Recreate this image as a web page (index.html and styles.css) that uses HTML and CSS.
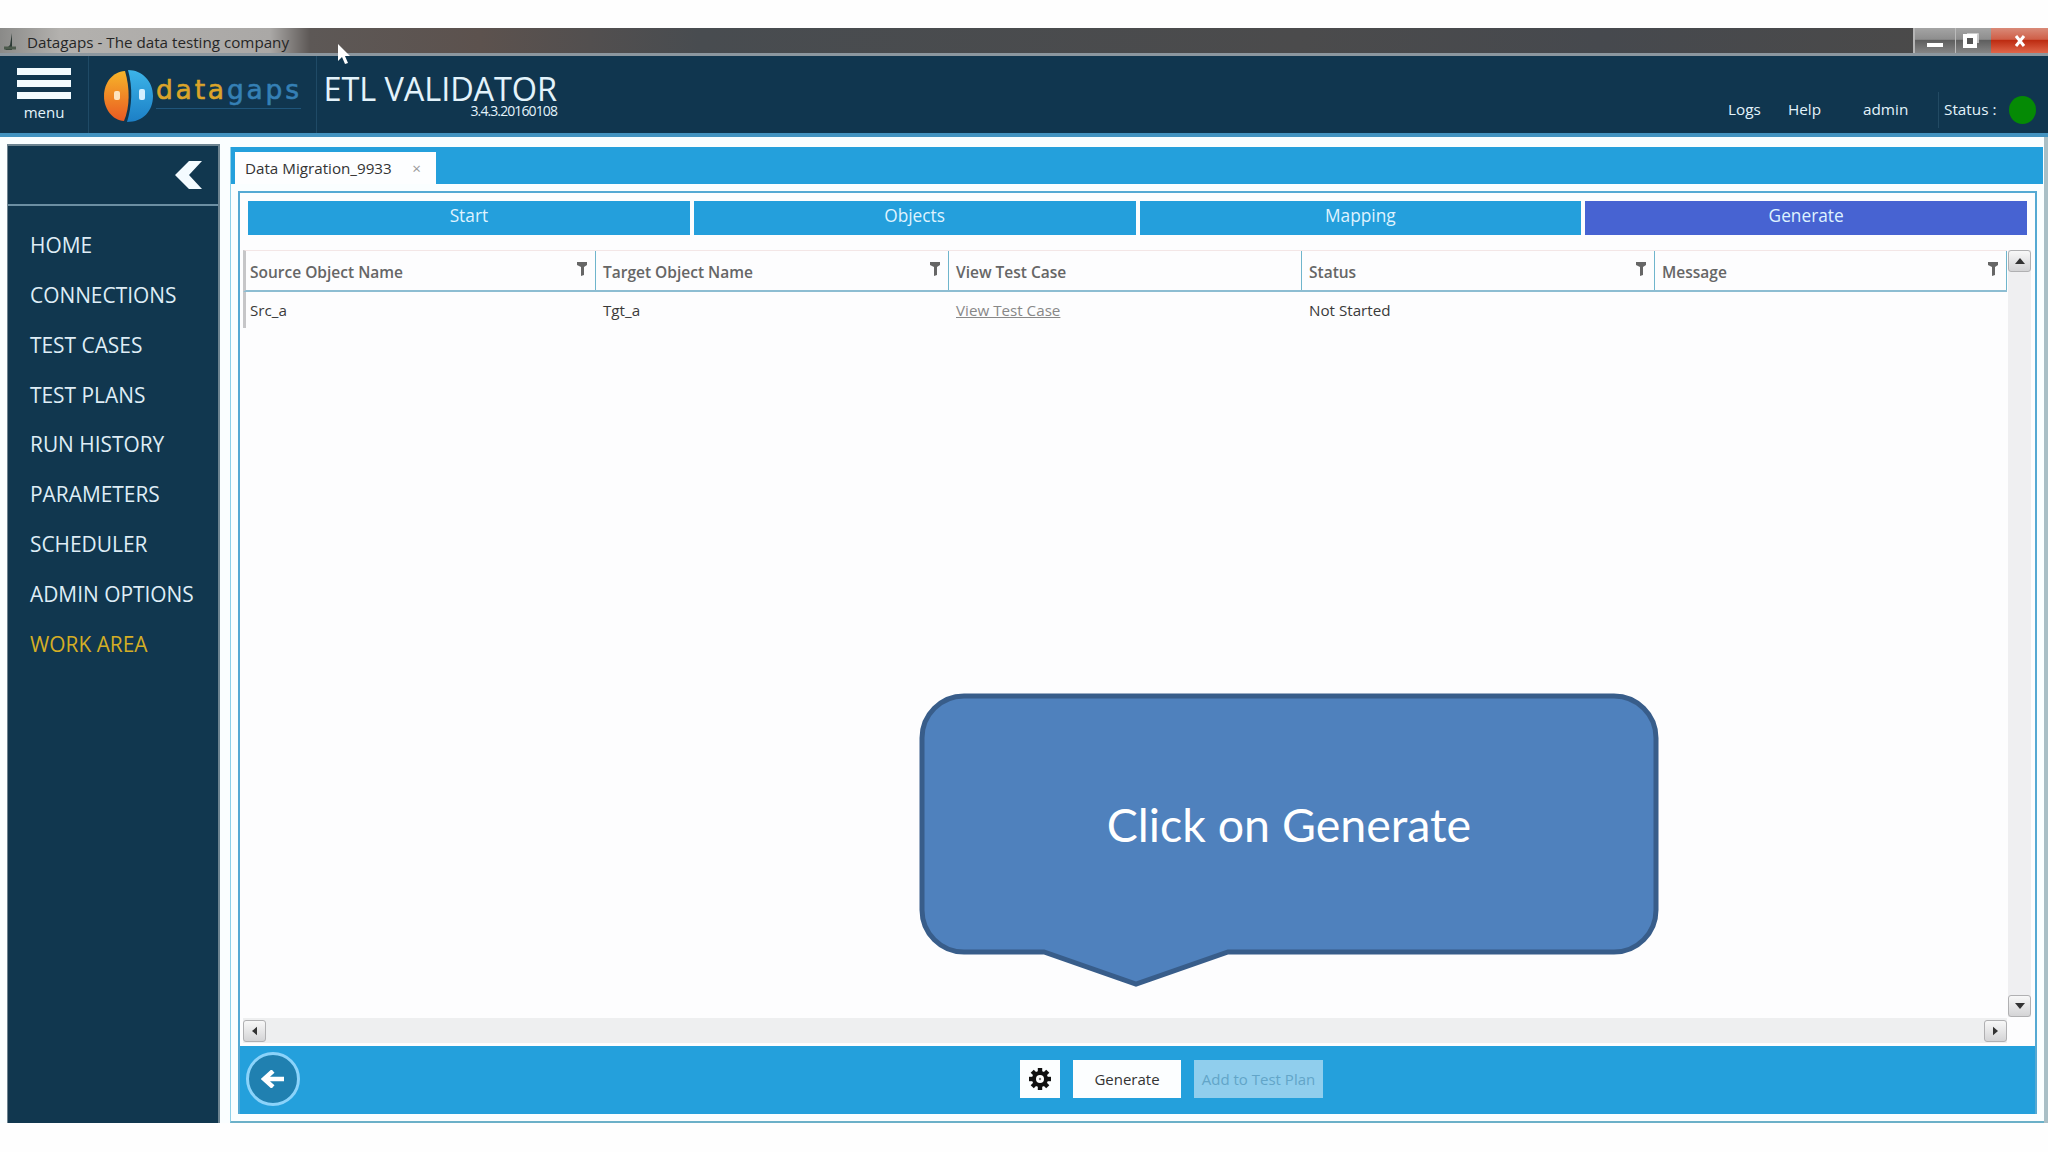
FILE: index.html
```
<!DOCTYPE html>
<html lang="en">
<head>
    <meta charset="UTF-8">
    <meta name="viewport" content="width=device-width, initial-scale=1.0">
    <title>Datagaps - The data testing company</title>
    <link rel="stylesheet" href="styles.css">
</head>
<body>
    <div class="window">
        <div class="titlebar">
            <svg class="app-icon" width="18" height="22" viewBox="0 0 18 22">
                <path d="M12 3v17H5l5-5z" fill="#2c3a35"/>
                <path d="M4 18h12" stroke="#4c5a4c" stroke-width="3"/>
            </svg>
            <span class="title-text">Datagaps - The data testing company</span>
            <div class="window-buttons">
                <span class="win-btn min"><svg width="18" height="6" viewBox="0 0 18 6"><rect x="1" y="1" width="16" height="4" fill="#fff"/></svg></span>
                <span class="win-btn max"><svg width="18" height="16" viewBox="0 0 18 16"><path d="M5 1h11v9" fill="none" stroke="#ddd" stroke-width="1.5"/><rect x="3" y="3" width="10" height="10" fill="#555" stroke="#fff" stroke-width="4"/></svg></span>
                <span class="win-btn close"><svg width="14" height="14" viewBox="0 0 14 14"><path d="M3 2l8 10M11 2L3 12" stroke="#fff" stroke-width="3"/></svg></span>
            </div>
        </div>

        <div class="header">
            <div class="menu-btn">
                <span class="bar"></span>
                <span class="bar"></span>
                <span class="bar"></span>
                <span class="menu-label">menu</span>
            </div>
            <div class="logo">
                <svg width="52" height="54" viewBox="0 0 52 54">
                    <defs>
                        <linearGradient id="orange" x1="0" y1="0" x2="0" y2="1">
                            <stop offset="0" stop-color="#f6b52a"/>
                            <stop offset="1" stop-color="#ea5a22"/>
                        </linearGradient>
                        <linearGradient id="blue" x1="0" y1="0" x2="0" y2="1">
                            <stop offset="0" stop-color="#3cb4e8"/>
                            <stop offset="1" stop-color="#1c7fc6"/>
                        </linearGradient>
                    </defs>
                    <path d="M23 2C10 3 2 14 2 27s8 24 20 25c6-14 6-33 1-50z" fill="url(#orange)"/>
                    <path d="M26 1c14 0 25 11 25 26S41 53 25 53c5-16 6-34 1-52z" fill="url(#blue)"/>
                    <rect x="12" y="22" width="6" height="9" rx="2" fill="#fde3c0"/>
                    <rect x="37" y="20" width="6" height="11" rx="2" fill="#d4efff"/>
                </svg>
                <div class="logo-text">
                    <div class="logo-name"><span class="data">data</span><span class="gaps">gaps</span></div>
                    <div class="logo-line"></div>
                </div>
            </div>
            <div class="product">
                <div class="product-name">ETL VALIDATOR</div>
                <div class="version">3.4.3.20160108</div>
            </div>
            <div class="header-links">
                <span class="logs">Logs</span>
                <span class="help">Help</span>
                <span class="user">admin</span>
                <span class="status">Status :</span>
                <span class="status-dot"></span>
            </div>
        </div>

        <div class="main">
            <div class="sidebar">
                <div class="collapse">
                    <svg width="28" height="28" viewBox="0 0 28 28"><path d="M14 0h13L14 14l13 14H14L0 14z" fill="#f4fbff"/></svg>
                </div>
                <ul class="nav">
                    <li>HOME</li>
                    <li>CONNECTIONS</li>
                    <li>TEST CASES</li>
                    <li>TEST PLANS</li>
                    <li>RUN HISTORY</li>
                    <li>PARAMETERS</li>
                    <li>SCHEDULER</li>
                    <li>ADMIN OPTIONS</li>
                    <li class="active">WORK AREA</li>
                </ul>
            </div>

            <div class="workspace">
                <div class="tabs">
                    <div class="tab">Data Migration_9933 <span class="tab-close">×</span></div>
                </div>
                <div class="panel">
                    <div class="steps">
                        <div class="step">Start</div>
                        <div class="step">Objects</div>
                        <div class="step">Mapping</div>
                        <div class="step current">Generate</div>
                    </div>

                    <div class="grid-area">
                        <div class="grid">
                            <div class="row head">
                                <div class="cell">Source Object Name <svg class="filter" width="10" height="14" viewBox="0 0 10 14"><path d="M0 0h10v3L7 5v8L4 14V5L0 3z"/></svg></div>
                                <div class="cell">Target Object Name <svg class="filter" width="10" height="14" viewBox="0 0 10 14"><path d="M0 0h10v3L7 5v8L4 14V5L0 3z"/></svg></div>
                                <div class="cell">View Test Case</div>
                                <div class="cell">Status <svg class="filter" width="10" height="14" viewBox="0 0 10 14"><path d="M0 0h10v3L7 5v8L4 14V5L0 3z"/></svg></div>
                                <div class="cell">Message <svg class="filter" width="10" height="14" viewBox="0 0 10 14"><path d="M0 0h10v3L7 5v8L4 14V5L0 3z"/></svg></div>
                            </div>
                            <div class="row">
                                <div class="cell">Src_a</div>
                                <div class="cell">Tgt_a</div>
                                <div class="cell"><a class="link">View Test Case</a></div>
                                <div class="cell">Not Started</div>
                                <div class="cell"></div>
                            </div>
                        </div>
                        <div class="vscroll">
                            <span class="scroll-btn"><svg width="10" height="6" viewBox="0 0 10 6"><path d="M5 0l5 6H0z"/></svg></span>
                            <span class="scroll-btn"><svg width="10" height="6" viewBox="0 0 10 6"><path d="M0 0h10L5 6z"/></svg></span>
                        </div>
                    </div>
                    <div class="hscroll">
                        <span class="scroll-btn"><svg width="5" height="10" viewBox="0 0 6 10"><path d="M6 0v10L0 5z"/></svg></span>
                        <span class="scroll-btn"><svg width="5" height="10" viewBox="0 0 6 10"><path d="M0 0l6 5-6 5z"/></svg></span>
                    </div>

                    <div class="footer">
                        <div class="back">
                            <svg width="24" height="18" viewBox="0 0 24 18"><path d="M23 9H4M12 1L3 9l9 8" fill="none" stroke="#fff" stroke-width="4.5"/></svg>
                        </div>
                        <div class="actions">
                            <span class="btn gear">
                                <svg width="22" height="22" viewBox="-11 -11 22 22">
                                    <g fill="#111">
                                        <circle r="8"/>
                                        <rect x="-2.2" y="-11" width="4.4" height="22"/>
                                        <rect x="-2.2" y="-11" width="4.4" height="22" transform="rotate(45)"/>
                                        <rect x="-2.2" y="-11" width="4.4" height="22" transform="rotate(90)"/>
                                        <rect x="-2.2" y="-11" width="4.4" height="22" transform="rotate(135)"/>
                                    </g>
                                    <circle r="4" fill="#fff"/>
                                    <circle r="1.2" fill="#777"/>
                                </svg>
                            </span>
                            <span class="btn generate">Generate</span>
                            <span class="btn add">Add to Test Plan</span>
                        </div>
                    </div>
                </div>
            </div>
        </div>
    </div>

    <!-- mouse pointer -->
    <svg class="cursor" width="14" height="21" viewBox="0 0 14 21"><path d="M1 0v17l4-4 3 7 3-1-3-7h5z" fill="#fff"/></svg>

    <!-- callout bubble -->
    <div class="callout">
        <svg width="740" height="296" viewBox="0 0 740 296">
            <path d="M45 3H695A42 42 0 0 1 737 45V217A42 42 0 0 1 695 259H309L217 291L125 259H45A42 42 0 0 1 3 217V45A42 42 0 0 1 45 3Z" fill="#4f81bd" stroke="#385d8a" stroke-width="5"/>
        </svg>
        <span class="callout-text">Click on Generate</span>
    </div>
</body>
</html>
```

FILE: styles.css
```
* {
    box-sizing: border-box;
}
body {
    margin: 0;
    width: 2048px;
    height: 1152px;
    padding-top: 28px;
    background: #fefefe;
    font-family: 'Open Sans', 'Noto Sans', sans-serif;
    font-size: 15px;
    overflow: hidden;
    position: relative;
}
svg {
    display: block;
    flex: none;
}
.window {
    height: 1095px;
    display: flex;
    flex-direction: column;
    background: #fafeff;
}

/* title bar */
.titlebar {
    height: 28px;
    display: flex;
    align-items: center;
    background: linear-gradient(90deg, #8a8a88 0, #b3b1ae 60px, #aaa8a6 270px, #5d5856 310px, #5c524e 480px, #484c50 700px, #4b4b4c 1300px, #46494e 1600px, #4c4a48 100%);
    border-bottom: 3px solid #8c979f;
    white-space: nowrap;
}
.app-icon {
    margin-right: 9px;
}
.title-text {
    flex: 1;
    font-size: 15.2px;
    color: #262626;
    line-height: 24px;
    padding-top: 3px;
}
.window-buttons {
    display: flex;
    width: 135px;
    height: 25px;
    border-left: 2px solid #b5b5b5;
}
.win-btn {
    display: flex;
    align-items: center;
    justify-content: center;
    background: linear-gradient(#a4a4a4 0, #8e8e8e 45%, #5f5f5f 50%, #858585 100%);
}
.min {
    width: 41px;
    padding-top: 8px;
    border-right: 1px solid #bbb;
}
.max {
    width: 35px;
    padding-right: 6px;
}
.close {
    flex: 1;
    background: linear-gradient(#d98a78 0, #cf5f48 45%, #bd2c12 50%, #e0664a 100%);
}

/* header */
.header {
    height: 81px;
    display: flex;
    background: #10364f;
    border-bottom: 4px solid #4393c0;
    color: #e3f3fb;
}
.menu-btn {
    width: 89px;
    padding: 12px 17px 0;
    display: flex;
    flex-direction: column;
    border-right: 1px solid #1f4a66;
}
.bar {
    height: 7px;
    margin-bottom: 5px;
    background: #f2fbff;
}
.menu-label {
    line-height: 22px;
    text-align: center;
    margin-top: -3px;
}
.logo {
    width: 228px;
    display: flex;
    padding: 13px 0 0 13px;
    border-right: 1px solid #1f4a66;
}
.logo-text {
    padding-left: 2px;
}
.logo-name {
    font-family: 'DejaVu Sans', sans-serif;
    font-size: 26.5px;
    line-height: 30px;
    letter-spacing: 2.8px;
    padding-top: 6px;
    -webkit-text-stroke: 0.6px;
}
.data {
    color: #dba42a;
}
.gaps {
    color: #3580b5;
}
.logo-line {
    width: 145px;
    border-top: 1px solid #1f557a;
    margin-top: 3px;
}
.product {
    width: 240px;
    padding-top: 19px;
    text-align: right;
    white-space: nowrap;
}
.product-name {
    font-size: 32.5px;
    line-height: 28px;
    letter-spacing: -0.1px;
}
.version {
    font-size: 14px;
    line-height: 16px;
    letter-spacing: -0.9px;
}
.header-links {
    flex: 1;
    display: flex;
    justify-content: flex-end;
    align-items: flex-start;
    padding: 40px 12px 0 0;
    line-height: 27px;
    font-size: 15.3px;
    white-space: nowrap;
}
.logs {
    width: 60px;
}
.help {
    width: 75px;
}
.user {
    width: 75px;
}
.status {
    width: 71px;
    height: 36px;
    margin-top: -4px;
    padding: 4px 0 0 5px;
    border-left: 1px solid #224a63;
}
.status-dot {
    width: 27px;
    height: 28px;
    border-radius: 50%;
    background: #058a05;
}

/* main area */
.main {
    flex: 1;
    display: flex;
    min-height: 0;
    border-right: 4px solid #a9bfc6;
}
.sidebar {
    width: 213px;
    flex: none;
    margin: 7px 0 0 7px;
    background: #11374f;
    border: solid #6c8390;
    border-width: 2px 2px 0 1px;
}
.collapse {
    height: 60px;
    display: flex;
    justify-content: flex-end;
    align-items: center;
    padding-right: 15px;
    border-bottom: 2px solid #6c8fa3;
}
.nav {
    list-style: none;
    margin: 0;
    padding: 14px 0 0 22px;
    color: #dfedf6;
    font-size: 20.9px;
}
.nav li {
    height: 49.85px;
    line-height: 50px;
    white-space: nowrap;
}
.nav .active {
    color: #d5ae25;
}
.workspace {
    flex: 1;
    min-width: 0;
    margin: 10px 0 0 10px;
    padding-right: 1px;
    display: flex;
    flex-direction: column;
    border-left: 1px solid #8fd0e8;
    border-bottom: 2px solid #6bb0c8;
}
.tabs {
    height: 37px;
    padding: 5px 0 0 4px;
    background: #24a0dc;
}
.tab {
    width: 201px;
    height: 32px;
    line-height: 33px;
    padding: 0 15px 0 10px;
    background: #fdfeff;
    color: #333;
    display: flex;
    justify-content: space-between;
    font-size: 15.2px;
}
.tab-close {
    color: #999;
}
.panel {
    flex: 1;
    margin: 7px 6px 7px 7px;
    display: flex;
    flex-direction: column;
    border: 2px solid #55a9d3;
    border-bottom: 0;
    background: #fdfdfe;
}
.steps {
    display: grid;
    grid-template-columns: repeat(4, 1fr);
    gap: 4px;
    padding: 8px 8px 15px 8px;
}
.step {
    height: 34px;
    line-height: 29px;
    text-align: center;
    font-size: 17.3px;
    color: #dff3ff;
    background: #249fdc;
}
.current {
    background: #4763d2;
}
.grid-area {
    flex: 1;
    display: flex;
    padding: 0 3px;
}
.grid {
    width: 1764px;
    flex: none;
}
.row {
    display: grid;
    grid-template-columns: 350px 353px 353px 353px 352px;
    height: 36px;
    color: #3a3a3a;
    font-size: 15.2px;
    border-left: 3px solid #c6c6c8;
}
.cell {
    display: flex;
    align-items: center;
    justify-content: space-between;
    padding: 0 8px 0 7px;
}
.cell:first-child {
    padding-left: 4px;
}
.head {
    height: 42px;
    color: #666;
    font-weight: 600;
    font-size: 15.5px;
    border-top: 1px solid #f3e6e6;
    border-bottom: 2px solid #8dbdd2;
}
.head .cell {
    border-right: 1px solid #6fb5cc;
    padding-top: 2px;
}
.filter {
    fill: #666;
    margin-bottom: 5px;
}
.link {
    color: #888;
    text-decoration: underline;
}
.vscroll {
    width: 23px;
    margin-left: 1px;
    display: flex;
    flex-direction: column;
    justify-content: space-between;
    background: #efeff1;
}
.scroll-btn {
    width: 23px;
    height: 22px;
    display: flex;
    align-items: center;
    justify-content: center;
    background: linear-gradient(#f8f8f8, #d4d4d6);
    border: 1px solid #b0b0b2;
    border-radius: 3px;
    fill: #333;
}
.hscroll {
    height: 25px;
    width: 1764px;
    margin: 1px 0 3px 3px;
    display: flex;
    align-items: center;
    justify-content: space-between;
    background: #eeeff0;
}

/* bottom toolbar */
.footer {
    height: 68px;
    display: flex;
    align-items: center;
    background: #24a0dc;
}
.back {
    width: 54px;
    height: 54px;
    margin: 0 0 2px 6px;
    border: 3px solid #8bd3fa;
    border-radius: 50%;
    background: #2080b0;
    display: flex;
    align-items: center;
    justify-content: center;
}
.actions {
    display: flex;
    gap: 13px;
    margin: 0 0 2px 720px;
}
.btn {
    height: 38px;
    display: flex;
    align-items: center;
    justify-content: center;
    background: #fcfeff;
    color: #333;
    white-space: nowrap;
}
.gear {
    width: 40px;
}
.generate {
    width: 108px;
}
.add {
    width: 129px;
    background: #90ceed;
    color: #62a5c8;
}

/* overlays */
.cursor {
    position: absolute;
    left: 337px;
    top: 44px;
}
.callout {
    position: absolute;
    left: 919px;
    top: 693px;
    width: 740px;
    height: 296px;
}
.callout-text {
    position: absolute;
    left: 0;
    top: 0;
    width: 740px;
    line-height: 262px;
    text-align: center;
    font-family: Lato, sans-serif;
    font-size: 46.5px;
    color: #fff;
}
```
